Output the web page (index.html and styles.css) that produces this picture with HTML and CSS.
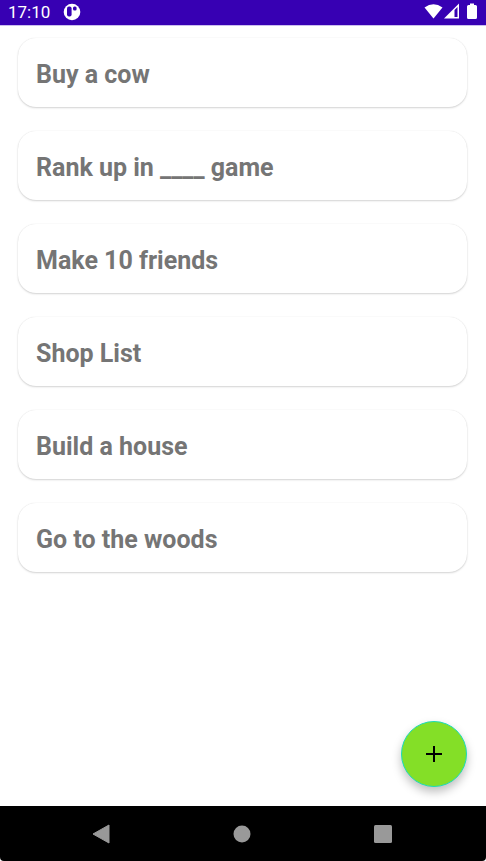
FILE: index.html
```html
<!DOCTYPE html>
<html lang="en">
<head>
<meta charset="utf-8">
<meta name="viewport" content="width=device-width, initial-scale=1">
<title>Goals</title>
<link rel="stylesheet" href="styles.css">
</head>
<body>
<header class="status">
  <time class="clock">17:10</time>
  <svg class="app-icon" width="18" height="18" viewBox="0 0 18 18" aria-hidden="true">
    <circle cx="9" cy="9" r="8.3" fill="#fff"/>
    <rect x="4" y="3.5" width="4.6" height="10" rx="2" fill="#3700b3"/>
    <rect x="10" y="3.6" width="3.6" height="4" rx="1.5" fill="#3700b3"/>
  </svg>
  <svg class="signals" width="54" height="18" viewBox="0 0 54 18" aria-hidden="true">
    <path d="M0.500 4.500Q9.500-1.800 18.500 4.500L9.500 15.500Z" fill="#fff"/>
    <path d="M20 15.500L35 0.500V15.500Z" fill="#fff"/>
    <path d="M30.500 7L33.500 4V14H30.500Z" fill="#3700b3"/>
    <path d="M44 2H46V0.500H50V2H51.500Q53 2 53 3.500V14.500Q53 16 51.500 16H44.500Q43 16 43 14.500V3.500Q43 2 44.500 2Z" fill="#fff"/>
  </svg>
</header>
<main class="content">
  <ul class="goals">
    <li class="card">Buy a cow</li>
    <li class="card">Rank up in ____ game</li>
    <li class="card">Make 10 friends</li>
    <li class="card">Shop List</li>
    <li class="card">Build a house</li>
    <li class="card">Go to the woods</li>
  </ul>
  <button class="fab" type="button" aria-label="Add goal">
    <svg width="18" height="18" viewBox="0 0 18 18" aria-hidden="true"><path d="M9 1v16M1 9h16" stroke="#000" stroke-width="2"/></svg>
  </button>
</main>
<nav class="navbar" aria-label="System navigation">
  <button class="nav-button" type="button" aria-label="Back">
    <svg width="20" height="20" viewBox="0 0 20 20" aria-hidden="true"><path d="M2 10L18 1V19Z" fill="#999" stroke="#999" stroke-linejoin="round"/></svg>
  </button>
  <button class="nav-button" type="button" aria-label="Home">
    <svg width="20" height="20" viewBox="0 0 20 20" aria-hidden="true"><circle cx="10" cy="10" r="8.500" fill="#999"/></svg>
  </button>
  <button class="nav-button" type="button" aria-label="Recent apps">
    <svg width="20" height="20" viewBox="0 0 20 20" aria-hidden="true"><rect x="1" y="1" width="18" height="18" rx="1.500" fill="#999"/></svg>
  </button>
</nav>
</body>
</html>
```
FILE: styles.css
```css
* {
  box-sizing: border-box;
}

body {
  margin: 0;
  min-height: 100vh;
  display: flex;
  flex-direction: column;
  background: #fff;
  font-family: Roboto, sans-serif;
}

.status {
  height: 26px;
  padding: 0 8px;
  display: flex;
  align-items: center;
  background: #3700b3;
  border-bottom: 1px solid #cbbdee;
  color: #fff;
}

.clock {
  font-size: 17px;
  line-height: 22px;
  padding-bottom: 2px;
}

.app-icon {
  margin-left: 13px;
  margin-bottom: 2px;
}

.signals {
  margin-left: auto;
  margin-bottom: 1px;
}

.content {
  flex: 1;
  display: flex;
  flex-direction: column;
  justify-content: space-between;
  padding: 12px 19px 19px 18px;
}

.goals {
  margin: 0;
  padding: 0;
  display: flex;
  flex-direction: column;
  gap: 24px;
  list-style: none;
}

.card {
  height: 69px;
  padding: 0 18px;
  border-radius: 18px;
  background: #fff;
  box-shadow: 0 1px 2px rgba(0, 0, 0, 0.17), 0 0 1px rgba(0, 0, 0, 0.12);
  color: #757575;
  font-size: 25px;
  font-weight: 700;
  line-height: 74px;
}

.fab {
  align-self: flex-end;
  width: 66px;
  height: 66px;
  padding: 0;
  display: grid;
  place-items: center;
  border: 1px solid #1bdcb8;
  border-radius: 50%;
  background: #84df27;
  box-shadow: 0 5px 10px rgba(0, 0, 0, 0.25);
}

.navbar {
  height: 55px;
  padding: 0 32px 0 30px;
  display: flex;
  align-items: center;
  border-radius: 0 0 4px 4px;
  background: #000;
}

.nav-button {
  flex: 1;
  padding: 0;
  height: 48px;
  display: grid;
  place-items: center;
  border: 0;
  background: none;
}
```
